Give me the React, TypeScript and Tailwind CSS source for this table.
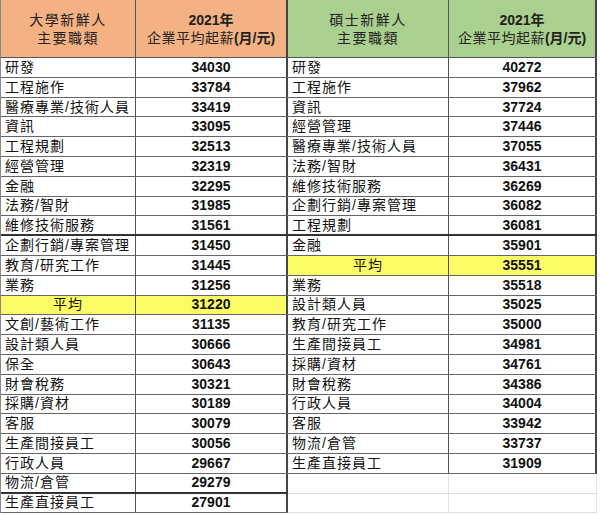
import React from 'react'

type Row = { label: string; value: string; avg?: boolean; thick?: boolean }

const bachelor: Row[] = [
    { label: '研發', value: '34030' },
    { label: '工程施作', value: '33784' },
    { label: '醫療專業/技術人員', value: '33419' },
    { label: '資訊', value: '33095' },
    { label: '工程規劃', value: '32513' },
    { label: '經營管理', value: '32319' },
    { label: '金融', value: '32295' },
    { label: '法務/智財', value: '31985' },
    { label: '維修技術服務', value: '31561', thick: true },
    { label: '企劃行銷/專案管理', value: '31450' },
    { label: '教育/研究工作', value: '31445' },
    { label: '業務', value: '31256' },
    { label: '平均', value: '31220', avg: true },
    { label: '文創/藝術工作', value: '31135' },
    { label: '設計類人員', value: '30666' },
    { label: '保全', value: '30643' },
    { label: '財會稅務', value: '30321' },
    { label: '採購/資材', value: '30189' },
    { label: '客服', value: '30079' },
    { label: '生產間接員工', value: '30056' },
    { label: '行政人員', value: '29667' },
    { label: '物流/倉管', value: '29279', thick: true },
    { label: '生產直接員工', value: '27901' },
]

const master: Row[] = [
    { label: '研發', value: '40272' },
    { label: '工程施作', value: '37962' },
    { label: '資訊', value: '37724' },
    { label: '經營管理', value: '37446' },
    { label: '醫療專業/技術人員', value: '37055' },
    { label: '法務/智財', value: '36431' },
    { label: '維修技術服務', value: '36269' },
    { label: '企劃行銷/專案管理', value: '36082' },
    { label: '工程規劃', value: '36081', thick: true },
    { label: '金融', value: '35901' },
    { label: '平均', value: '35551', avg: true },
    { label: '業務', value: '35518' },
    { label: '設計類人員', value: '35025' },
    { label: '教育/研究工作', value: '35000' },
    { label: '生產間接員工', value: '34981' },
    { label: '採購/資材', value: '34761' },
    { label: '財會稅務', value: '34386' },
    { label: '行政人員', value: '34004' },
    { label: '客服', value: '33942' },
    { label: '物流/倉管', value: '33737' },
    { label: '生產直接員工', value: '31909' },
]

const cjk = "font-['Liberation_Sans','Noto_Sans_CJK_TC',sans-serif]"

const Table: React.FC<{
    title: string
    headBg: string
    rows: Row[]
    labelW: string
    valueW: string
    blankRows?: number
}> = ({ title, headBg, rows, labelW, valueW, blankRows = 0 }) => {
    return (
        <div className="flex flex-col">
            <div className={`flex h-[58px] ${headBg} border-b border-[#555] text-[#222]`}>
                <div
                    className={`${labelW} flex flex-col items-center justify-center border-r border-[#555] text-[14px] leading-[18px] tracking-[1.5px]`}
                >
                    <div>{title}</div>
                    <div>主要職類</div>
                </div>
                <div
                    className={`${valueW} flex flex-col items-center justify-center border-r-2 border-[#444] text-[14px] leading-[18px]`}
                >
                    <div className="font-bold">2021年</div>
                    <div>
                        <span className="tracking-[0.5px]">企業平均起薪</span>
                        <span className="font-bold">(月/元)</span>
                    </div>
                </div>
            </div>
            {rows.map((r) => (
                <div
                    key={r.label}
                    className={`flex h-[19.8px] items-center ${
                        r.avg ? 'bg-[#fbfb66]' : 'bg-white'
                    } ${r.thick ? 'border-b-2 border-[#333]' : 'border-b border-[#666]'}`}
                >
                    <div
                        className={`${labelW} h-full flex items-center border-r border-[#555] text-[14px] tracking-[1px] text-[#111] ${
                            r.avg ? 'justify-center' : 'pl-[4px]'
                        }`}
                    >
                        {r.label}
                    </div>
                    <div
                        className={`${valueW} h-full flex items-center justify-center border-r-2 border-[#444] text-[14px] font-bold text-[#111]`}
                    >
                        {r.value}
                    </div>
                </div>
            ))}
            {Array.from({ length: blankRows }).map((_, i) => (
                <div key={i} className="flex h-[19.8px] border-b border-[#ddd]">
                    <div className={`${labelW} h-full border-r border-[#e3e3e3]`} />
                    <div className={`${valueW} h-full border-r border-[#e3e3e3]`} />
                </div>
            ))}
        </div>
    )
}

export default function App() {
    return (
        <div className={`w-[600px] h-[515px] overflow-hidden bg-white flex items-start ${cjk}`}>
            <div className="border-l border-[#888]">
                <Table
                    title="大學新鮮人"
                    headBg="bg-[#f4b183]"
                    rows={bachelor}
                    labelW="w-[135px]"
                    valueW="w-[152px]"
                />
            </div>
            <Table
                title="碩士新鮮人"
                headBg="bg-[#a9d08e]"
                rows={master}
                labelW="w-[161px]"
                valueW="w-[148px]"
                blankRows={2}
            />
        </div>
    )
}
